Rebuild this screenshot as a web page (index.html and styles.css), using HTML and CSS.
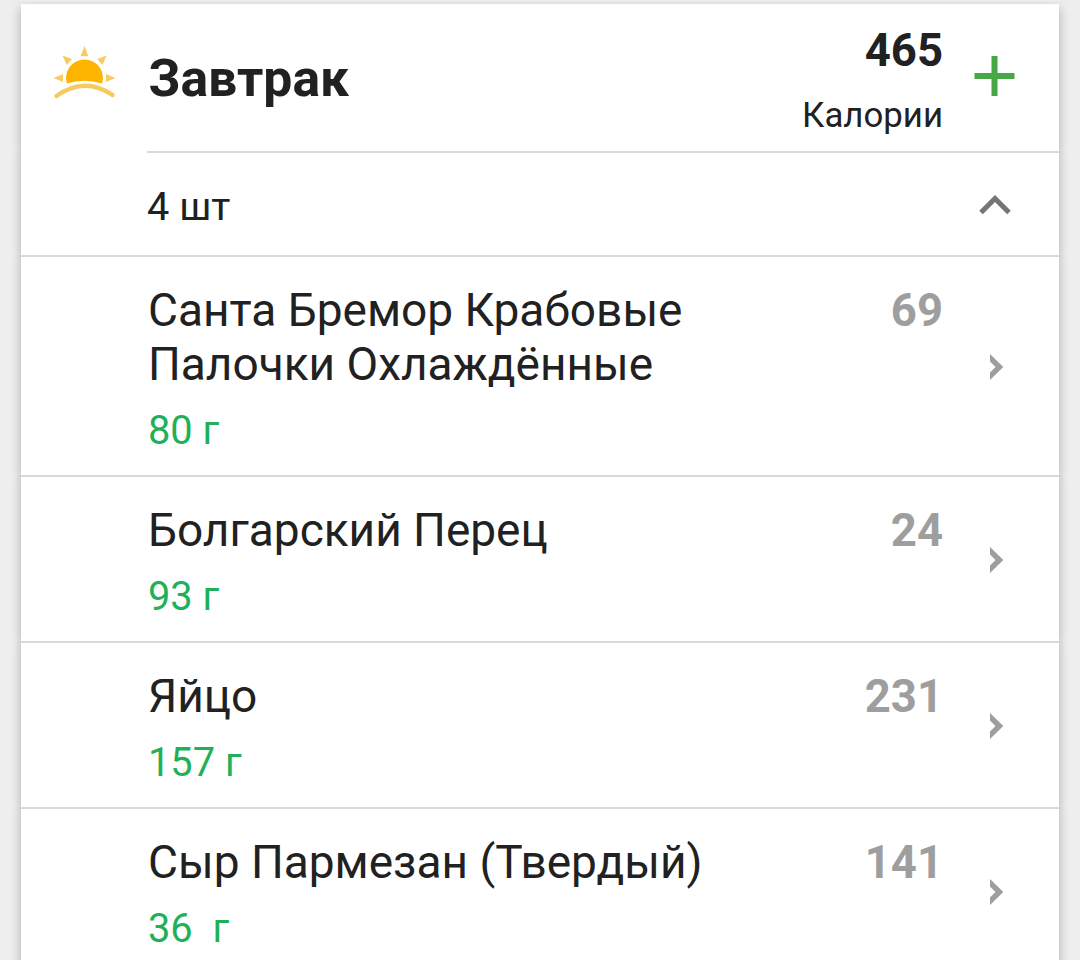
FILE: index.html
```html
<!DOCTYPE html>
<html lang="ru">

<head>
    <meta charset="UTF-8">
    <meta name="viewport" content="width=device-width, initial-scale=1.0">
    <title>Завтрак</title>
    <link rel="stylesheet" href="styles.css">
</head>

<body>

    <div class="meal">
        <div class="row header">
            <svg class="sun" width="66" height="56" viewBox="0 0 66 56">
                <path fill="#fdb400" d="M14.800 38.500A18.500 18.500 0 1 1 50.200 38.500Q32.500 33 14.800 38.500Z"/>
                <g fill="#f6cb62">
                    <path d="M32.500 1L36.300 11.300H28.500Z"/>
                    <path d="M10.500 10.500L20 14L14.700 20Z"/>
                    <path d="M54.500 10.500L45.300 14L50.500 20Z"/>
                    <path d="M1.500 33L11 29V37Z"/>
                    <path d="M63.500 33L54 29V37Z"/>
                </g>
                <path fill="none" stroke="#f5cb5f" stroke-width="4.500" stroke-linecap="round" d="M4.500 51Q32.500 31 60.500 50"/>
            </svg>
            <h1 class="title">Завтрак</h1>
            <div class="total">
                <div class="total-value">465</div>
                <div class="total-label">Калории</div>
            </div>
            <svg class="plus" width="42" height="42" viewBox="0 0 42 42">
                <path fill="none" stroke="#45a845" stroke-width="6" d="M21.500 1V41M1.500 21H41.500"/>
            </svg>
        </div>

        <div class="row count">
            <span>4 шт</span>
            <svg class="collapse" width="32" height="20" viewBox="0 0 32 20">
                <path fill="none" stroke="#757575" stroke-width="5" d="M2 17.500L16 3.500L30 17.500"/>
            </svg>
        </div>

        <div class="row item">
            <div class="info">
                <div class="name">Санта Бремор Крабовые Палочки Охлаждённые</div>
                <div class="weight">80 г</div>
            </div>
            <div class="kcal">69</div>
            <svg class="arrow" width="14" height="26" viewBox="0 0 14 26">
                <path fill="#9e9e9e" d="M0 0L13.300 13L0 26V18.500L5.500 13L0 7.500Z"/>
            </svg>
        </div>

        <div class="row item">
            <div class="info">
                <div class="name">Болгарский Перец</div>
                <div class="weight">93 г</div>
            </div>
            <div class="kcal">24</div>
            <svg class="arrow" width="14" height="26" viewBox="0 0 14 26">
                <path fill="#9e9e9e" d="M0 0L13.300 13L0 26V18.500L5.500 13L0 7.500Z"/>
            </svg>
        </div>

        <div class="row item">
            <div class="info">
                <div class="name">Яйцо</div>
                <div class="weight">157 г</div>
            </div>
            <div class="kcal">231</div>
            <svg class="arrow" width="14" height="26" viewBox="0 0 14 26">
                <path fill="#9e9e9e" d="M0 0L13.300 13L0 26V18.500L5.500 13L0 7.500Z"/>
            </svg>
        </div>

        <div class="row item">
            <div class="info">
                <div class="name">Сыр Пармезан (Твердый)</div>
                <div class="weight">36&nbsp; г</div>
            </div>
            <div class="kcal">141</div>
            <svg class="arrow" width="14" height="26" viewBox="0 0 14 26">
                <path fill="#9e9e9e" d="M0 0L13.300 13L0 26V18.500L5.500 13L0 7.500Z"/>
            </svg>
        </div>
    </div>

</body>

</html>
```

FILE: styles.css
```css
* {
    margin: 0;
    padding: 0;
    box-sizing: border-box;
}

body {
    height: 960px;
    overflow: hidden;
    background: #eeeeee;
    color: #212121;
    font-family: Roboto, "Noto Sans", sans-serif;
}

.meal {
    padding: 4px 21px 0;
}

.row {
    display: flex;
    background: #fff;
    box-shadow: 0 4px 10px rgba(0, 0, 0, 0.27);
    /* the shadow shows only at the sides of the row */
    clip-path: inset(0 -20px -14px);
}

.header {
    height: 147px;
    padding-left: 31px;
    clip-path: inset(-3px -20px -14px);
}

.sun {
    margin-top: 41px;
}

.title {
    flex: 1;
    margin: 44px 0 0 30.5px;
    font-size: 51.7px;
    line-height: 62px;
    font-weight: 700;
}

.total {
    padding-top: 20px;
    text-align: right;
}

.total-value {
    font-size: 45.5px;
    line-height: 54px;
    font-weight: 700;
}

.total-label {
    margin-top: 17px;
    font-size: 34.8px;
    line-height: 41px;
}

.plus {
    margin: 51px 44px 0 30px;
}

.count {
    height: 104px;
    align-items: center;
    justify-content: space-between;
    padding: 7px 48px 0 126px;
    font-size: 39.7px;
    line-height: 47px;
    /* divider starts under the text, not at the edge */
    background: linear-gradient(#d9d9d9, #d9d9d9) 126px 0 / 100% 2px no-repeat #fff;
}

.collapse {
    margin-bottom: 4px;
}

.item {
    padding: 26px 55px 21px 127px;
    border-top: 2px solid #d9d9d9;
}

.info {
    width: 580px;
}

.name {
    font-size: 46px;
    line-height: 54px;
}

.weight {
    margin-top: 16px;
    font-size: 39.8px;
    line-height: 47px;
    color: #1fb058;
}

.kcal {
    flex: 1;
    padding-top: 1px;
    text-align: right;
    font-size: 45.5px;
    line-height: 54px;
    font-weight: 700;
    color: #9e9e9e;
}

.arrow {
    align-self: center;
    margin: 0 0 4px 47px;
}
```
